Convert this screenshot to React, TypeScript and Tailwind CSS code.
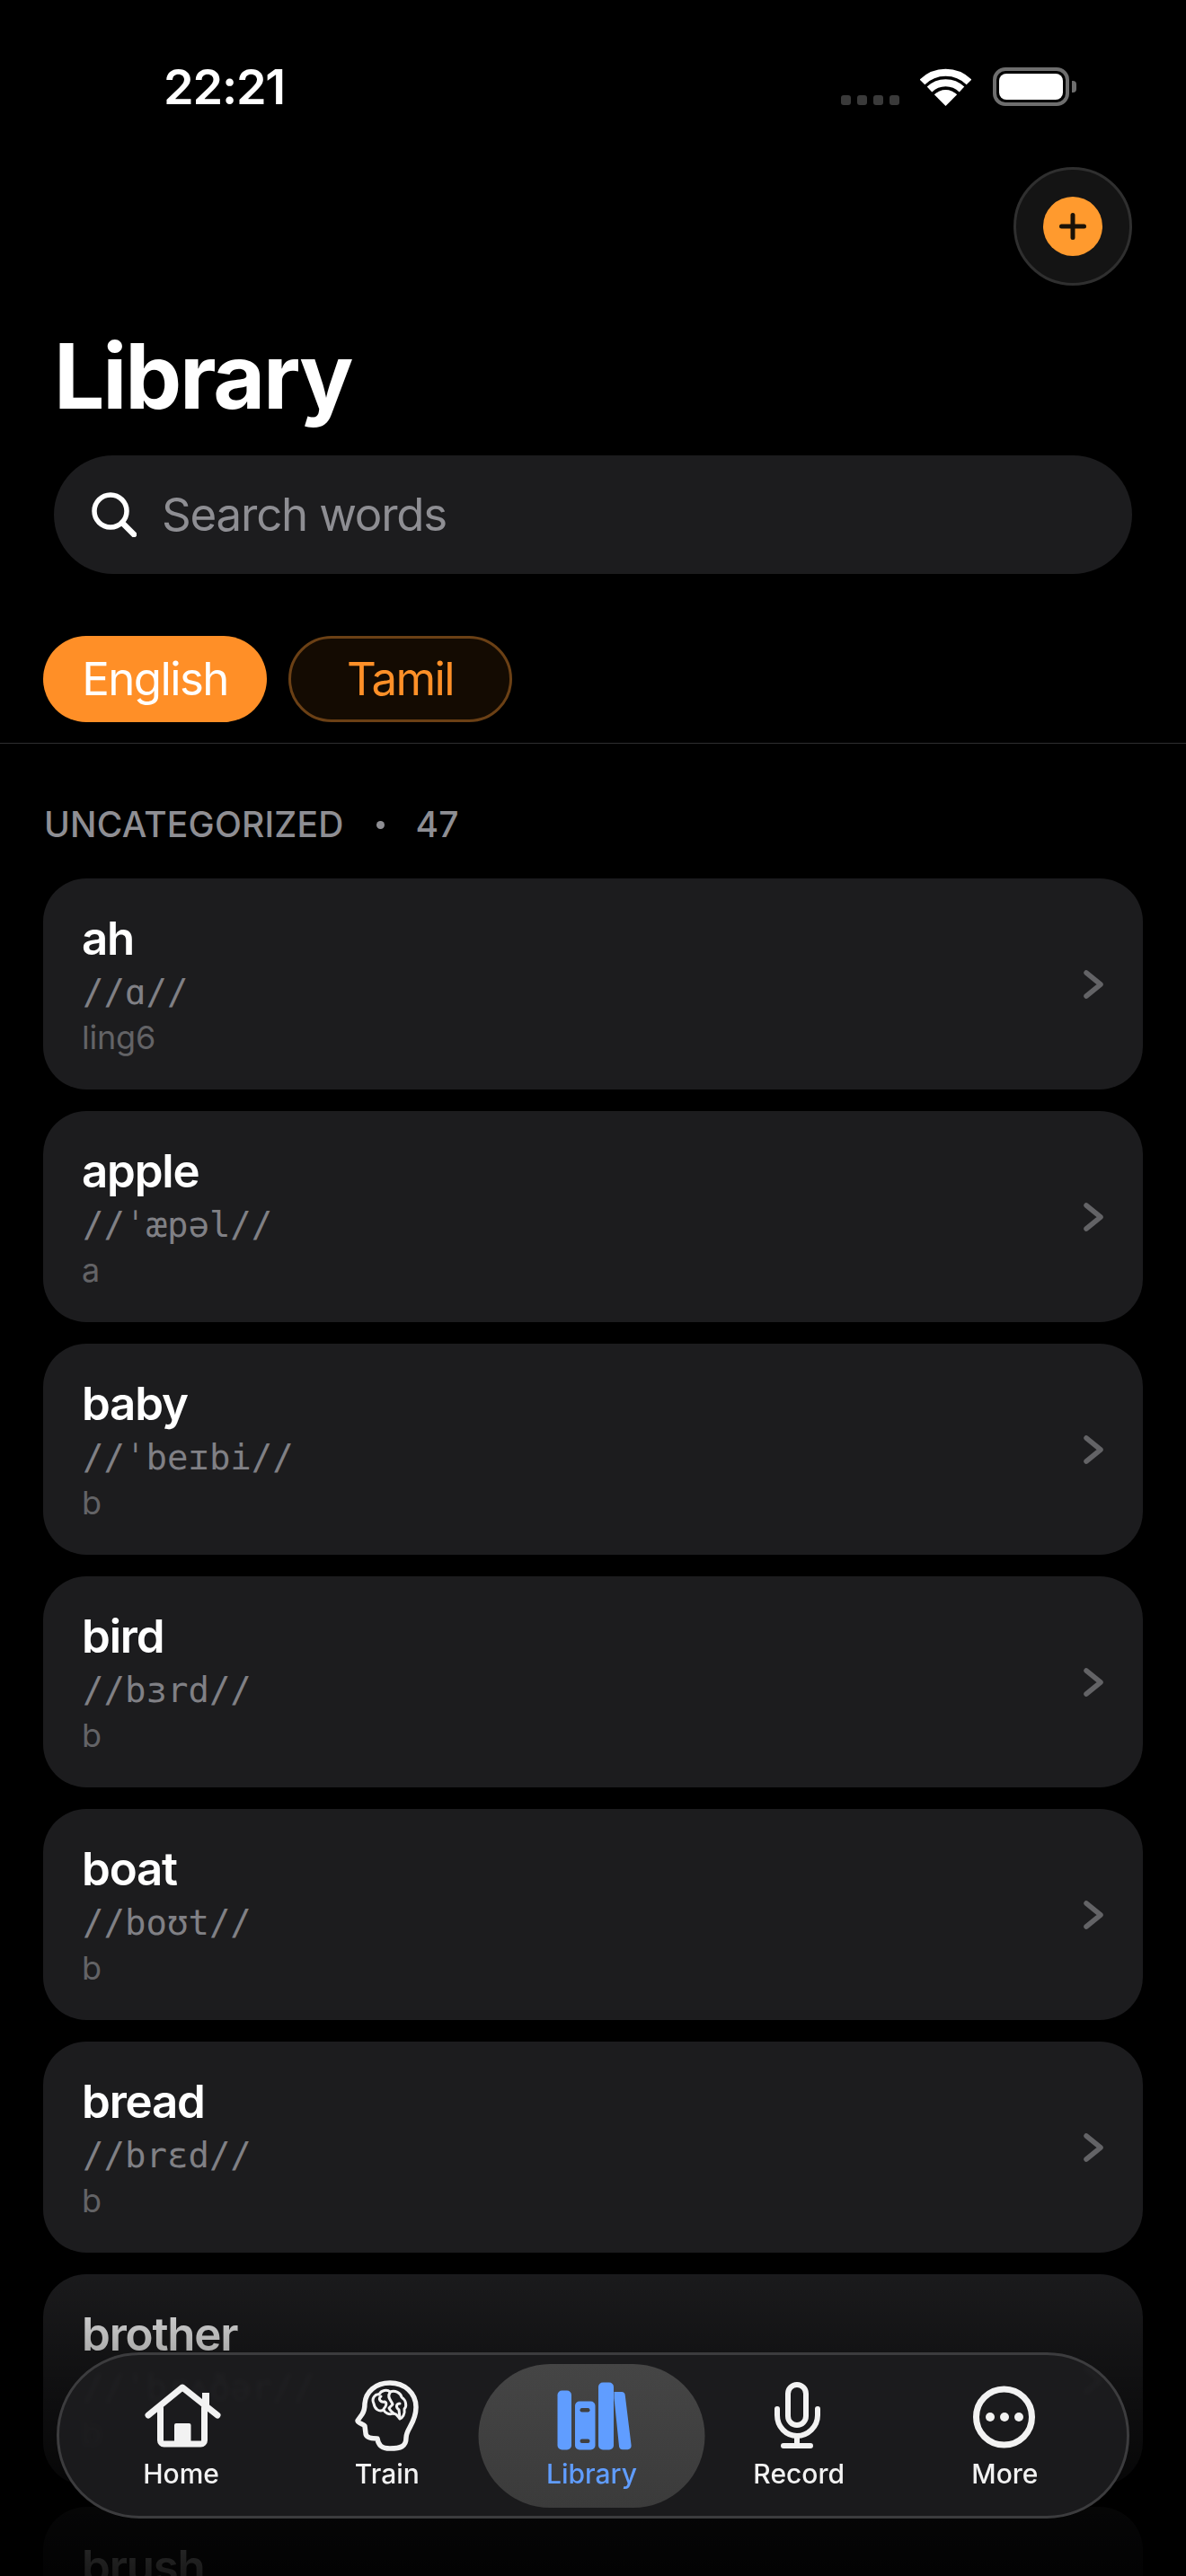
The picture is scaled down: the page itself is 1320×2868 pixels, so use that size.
import React from 'react';

type Word = { name: string; ipa: string; tag: string };

const words: Word[] = [
    { name: 'ah', ipa: '//ɑ//', tag: 'ling6' },
    { name: 'apple', ipa: "//ˈæpəl//", tag: 'a' },
    { name: 'baby', ipa: "//ˈbeɪbi//", tag: 'b' },
    { name: 'bird', ipa: '//bɜrd//', tag: 'b' },
    { name: 'boat', ipa: '//boʊt//', tag: 'b' },
    { name: 'bread', ipa: '//brɛd//', tag: 'b' },
    { name: 'brother', ipa: "//ˈbrʌðər//", tag: 'b' },
    { name: 'brush', ipa: '//brʌʃ//', tag: 'b' },
];

const iconClass = 'h-[88px] w-[140px] shrink-0';

const HomeIcon = () => (
    <svg viewBox="0 0 140 88" className={iconClass} fill="none" stroke="#f2f2f2" strokeWidth="7" strokeLinecap="round" strokeLinejoin="round">
        <path d="M33 41 71 10l39 31" />
        <path d="M46.5 33v36a4 4 0 0 0 4 4h41a4 4 0 0 0 4-4V33" />
        <path d="M97 16v18" strokeLinecap="butt" strokeWidth="8" />
        <rect x="62" y="50" width="18.5" height="26" rx="2" fill="#f2f2f2" stroke="none" />
    </svg>
);

const BrainIcon = () => (
    <svg viewBox="0 0 140 88" className={iconClass} fill="none" stroke="#f2f2f2" strokeLinecap="round" strokeLinejoin="round">
        <g transform="translate(-1 -18)">
            <path strokeWidth="5.5" d="M92 84C92 74 103 68 103 50 103 34 90 23 74 23 58 23 47 33 46 46 46 52 45 55 43 58L38 65C38 68 45 69 46 71L47 79C47 84 53 85 60 85 61 92 64 96 74 96 86 96 92 94 92 84Z" />
            <path strokeWidth="3" d="M56 46C53 40 58 35 62 36 64 31 71 30 74 33 80 31 86 34 87 39 92 42 93 49 90 52 91 58 88 62 85 63 82 59 81 57 77 57 73 59 68 56 67 53 62 56 57 52 56 46Z" />
            <path strokeWidth="3" d="M64 38C60 41 64 45 68 44 71 45 70 49 67 52M74 34C70 39 76 43 77 47L73 51C74 54 77 56 78 57M85 46C81 46 80 50 84 53L85 62" />
        </g>
    </svg>
);

const BooksIcon = () => (
    <svg viewBox="0 0 140 88" className={iconClass} fill="#609dff">
        <rect x="32" y="13.5" width="15.5" height="66" rx="5" />
        <rect x="51.5" y="25.5" width="22.5" height="54" rx="5" />
        <rect x="77.5" y="4.5" width="17" height="75" rx="5" />
        <path d="M95 15h8a4 4 0 0 1 4.2 3.6l6.9 56a4 4 0 0 1-4 4.6h-5.6a4 4 0 0 1-4-3.6L95 22Z" />
        <rect x="57" y="33" width="11" height="4.5" rx="2.2" fill="#404040" />
        <rect x="57" y="67.5" width="11" height="4.5" rx="2.2" fill="#404040" />
    </svg>
);

const MicIcon = () => (
    <svg viewBox="0 0 140 88" className={iconClass} fill="none" stroke="#f2f2f2" strokeWidth="6" strokeLinecap="round" strokeLinejoin="round">
        <rect x="58" y="7" width="20" height="45" rx="10" />
        <path d="M46 34v7c0 13 10 23 22 23s23-10 23-23v-7" />
        <path d="M68 64v11M53 75h30" />
    </svg>
);

const MoreIcon = () => (
    <svg viewBox="0 0 140 88" className={iconClass} fill="none">
        <circle cx="69.5" cy="43" r="31" stroke="#f2f2f2" strokeWidth="7" />
        <circle cx="54" cy="43" r="5" fill="#f2f2f2" />
        <circle cx="70" cy="43" r="5" fill="#f2f2f2" />
        <circle cx="86" cy="43" r="5" fill="#f2f2f2" />
    </svg>
);

const StatusBar = () => (
    <div className="flex h-[186px] items-start pl-[182px] pt-[75px]">
        <span className="text-[54px] font-semibold leading-[43px] tracking-[-1.2px] text-white">22:21</span>
        <div className="ml-auto mr-[122px] flex items-end">
            <div className="mb-[1px] mr-[23px] flex gap-[7px]">
                <span className="h-[11px] w-[11px] rounded-[3px] bg-[#3a3a3a]" />
                <span className="h-[11px] w-[11px] rounded-[3px] bg-[#3a3a3a]" />
                <span className="h-[11px] w-[11px] rounded-[3px] bg-[#3a3a3a]" />
                <span className="h-[11px] w-[11px] rounded-[3px] bg-[#3a3a3a]" />
            </div>
            <svg viewBox="0 0 57 42" className="mr-[24px] h-[42px] w-[57px]" fill="none" stroke="#fff" strokeWidth="8">
                <path d="M2.5 15.5a37 37 0 0 1 52 0" />
                <path d="M10.5 23.5a26 26 0 0 1 36 0" />
                <path d="M28.5 42 15.8 29.3a18 18 0 0 1 25.4 0Z" fill="#fff" stroke="none" />
            </svg>
            <div className="flex items-center">
                <div className="flex h-[43px] w-[85px] items-center justify-center rounded-[14px] border-[4px] border-[#6e6e6e]">
                    <div className="h-[29px] w-[71px] rounded-[8px] bg-white" />
                </div>
                <div className="ml-[3px] h-[13px] w-[5px] rounded-r-[4px] bg-[#6e6e6e]" />
            </div>
        </div>
    </div>
);

const WordCard = ({ word }: { word: Word }) => (
    <div className="flex h-[235px] items-center rounded-[48px] bg-[#1c1c1e] pl-[43px] pr-[44px]">
        <div className="h-full flex-1 pt-[37px]">
            <div className="text-[51px] font-semibold leading-[60px] tracking-[-1.2px] text-white">{word.name}</div>
            <div className="ml-[1px] mt-[7px] font-['DejaVu_Sans_Mono',monospace] text-[39px] font-light leading-[46px] text-[#808085]">{word.ipa}</div>
            <div className="mt-[5px] text-[36px] leading-[44px] tracking-[-0.2px] text-[#636366]">{word.tag}</div>
        </div>
        <svg viewBox="0 0 22 32" className="h-[32px] w-[22px]" fill="none" stroke="#636366" strokeWidth="5.5" strokeLinecap="round" strokeLinejoin="round">
            <path d="M3 3l16 13L3 29" />
        </svg>
    </div>
);

const TabItem = ({ label, active, children }: { label: string; active?: boolean; children: React.ReactNode }) => (
    <div className={`relative flex flex-1 flex-col items-center ${active ? '-translate-x-[1.5px]' : ''}`}>
        {active && (
            <div className="absolute left-[-11px] right-[-11px] top-[-16px] h-[160px] rounded-[80px] bg-linear-to-b from-[#454545] to-[#3b3b3b]" />
        )}
        <div className="relative flex flex-col items-center">
            {children}
            <span className={`text-[30px] font-medium leading-[36px] ${active ? 'text-[#609dff]' : 'text-[#f2f2f2]'}`}>{label}</span>
        </div>
    </div>
);

const App: React.FC = () => {
    return (
        <div className="relative h-[2868px] w-[1320px] overflow-hidden bg-black font-['Inter',sans-serif]">
            <StatusBar />

            <div className="flex h-[132px] justify-end pr-[60px]">
                <div className="flex h-[132px] w-[132px] items-center justify-center rounded-full border-[3px] border-[#2f2f2f] bg-[#141414]">
                    <div className="flex h-[66px] w-[66px] items-center justify-center rounded-full bg-[#ff9a2e]">
                        <svg viewBox="0 0 30 30" className="h-[30px] w-[30px]" fill="none" stroke="#1a1208" strokeWidth="5" strokeLinecap="round">
                            <path d="M15 2.5v25M2.5 15h25" />
                        </svg>
                    </div>
                </div>
            </div>

            <div className="h-[189px] pl-[60px] pt-[46px]">
                <h1 className="text-[100px] font-bold leading-[110px] tracking-[-2.2px] text-white">Library</h1>
            </div>

            <div className="mx-[60px] flex h-[132px] items-center rounded-full bg-[#1c1c1e] pl-[42px]">
                <svg viewBox="0 0 50 50" className="h-[50px] w-[50px]" fill="none" stroke="#fff" strokeWidth="5.5" strokeLinecap="round">
                    <circle cx="21" cy="21" r="18" />
                    <path d="M34 34l13 13" strokeWidth="6.5" />
                </svg>
                <span className="ml-[28px] text-[51px] leading-[60px] tracking-[-1.2px] text-[#8e8e93]">Search words</span>
            </div>

            <div className="mt-[69px] flex gap-[24px] px-[48px]">
                <div className="flex h-[96px] w-[249px] items-center justify-center rounded-[48px] bg-[#ff8f27] text-[51px] tracking-[-1.6px] text-white">English</div>
                <div className="flex h-[96px] w-[249px] items-center justify-center rounded-[48px] border-[3px] border-[#6b4015] bg-[#140b02] text-[51px] tracking-[-1.6px] text-[#ff9028]">Tamil</div>
            </div>

            <div className="mt-[23px] h-px bg-[#2e2e30]" />

            <div className="mb-[36px] ml-[49px] mt-[66px] flex items-center text-[39px] font-medium leading-[48px] tracking-[0.2px] text-[#8e8e93]">
                <span>UNCATEGORIZED</span>
                <span className="ml-[36px] h-[9px] w-[9px] rounded-full bg-[#8e8e93]" />
                <span className="ml-[35px]">47</span>
            </div>

            <div className="flex flex-col gap-[24px] px-[48px]">
                {words.map((word) => (
                    <WordCard key={word.name} word={word} />
                ))}
            </div>

            <div className="absolute inset-x-0 bottom-0 h-[360px] bg-linear-to-b from-transparent via-black/75 via-70% to-black/90" />

            <div className="absolute bottom-[64px] left-[63px] right-[63px] flex h-[185px] rounded-[92px] border-[3px] border-[#3c3c3e] bg-[#1c1c1e]/92 px-[21px] pt-[26px] backdrop-blur-[2px]">
                <TabItem label="Home"><HomeIcon /></TabItem>
                <TabItem label="Train"><BrainIcon /></TabItem>
                <TabItem label="Library" active><BooksIcon /></TabItem>
                <TabItem label="Record"><MicIcon /></TabItem>
                <TabItem label="More"><MoreIcon /></TabItem>
            </div>
        </div>
    );
};

export default App;
